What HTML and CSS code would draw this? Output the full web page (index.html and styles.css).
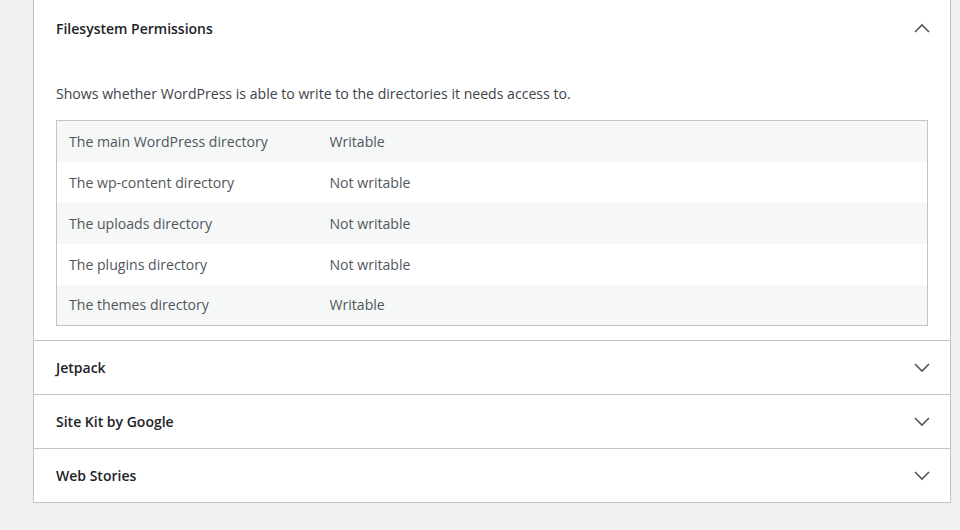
FILE: index.html
```html
<!DOCTYPE html>
<html>
<head>
<meta charset="utf-8">
<link rel="stylesheet" href="styles.css">
</head>
<body>
<div class="wrap">
  <div class="accordion">
    <section class="panel open">
      <div class="panel-head first">
        <span class="title">Filesystem Permissions</span>
        <svg class="chev" width="16" height="10" viewBox="0 0 16 10"><path d="M1 9 L8 2 L15 9" fill="none" stroke="#50575e" stroke-width="1.6"/></svg>
      </div>
      <div class="panel-body">
        <p class="desc">Shows whether WordPress is able to write to the directories it needs access to.</p>
        <table class="info">
          <tr><td class="k">The main WordPress directory</td><td>Writable</td></tr>
          <tr><td class="k">The wp-content directory</td><td>Not writable</td></tr>
          <tr><td class="k">The uploads directory</td><td>Not writable</td></tr>
          <tr><td class="k">The plugins directory</td><td>Not writable</td></tr>
          <tr><td class="k">The themes directory</td><td>Writable</td></tr>
        </table>
      </div>
    </section>
    <section class="panel">
      <div class="panel-head">
        <span class="title">Jetpack</span>
        <svg class="chev" width="16" height="10" viewBox="0 0 16 10"><path d="M1 1 L8 8 L15 1" fill="none" stroke="#50575e" stroke-width="1.6"/></svg>
      </div>
    </section>
    <section class="panel">
      <div class="panel-head">
        <span class="title">Site Kit by Google</span>
        <svg class="chev" width="16" height="10" viewBox="0 0 16 10"><path d="M1 1 L8 8 L15 1" fill="none" stroke="#50575e" stroke-width="1.6"/></svg>
      </div>
    </section>
    <section class="panel">
      <div class="panel-head">
        <span class="title">Web Stories</span>
        <svg class="chev" width="16" height="10" viewBox="0 0 16 10"><path d="M1 1 L8 8 L15 1" fill="none" stroke="#50575e" stroke-width="1.6"/></svg>
      </div>
    </section>
  </div>
</div>
</body>
</html>
```
FILE: styles.css
```css
html, body {
  margin: 0;
  padding: 0;
  background: #f0f0f1;
  font-family: "Open Sans", "Noto Sans", sans-serif;
  color: #2c3338;
}
.wrap {
  padding: 0 9px 0 33px;
}
.accordion {
  background: #fff;
  border: 1px solid #c3c4c7;
  border-top: none;
  width: 916px;
}
.panel + .panel {
  border-top: 1px solid #c3c4c7;
}
.panel-head {
  height: 53px;
  display: flex;
  align-items: center;
  justify-content: space-between;
  padding: 0 20px 0 22px;
}
.panel-head.first {
  height: 56px;
}
.title {
  font-size: 14px;
  font-weight: 600;
  color: #1d2327;
}
.chev {
  display: block;
}
.panel-body {
  padding: 0 22px 14px 22px;
}
.desc {
  margin: 0;
  padding: 27px 0 15px;
  font-size: 14.1px;
  line-height: 22px;
  color: #3c434a;
}
.info {
  width: 100%;
  border-collapse: collapse;
  border: 1px solid #c3c4c7;
  font-size: 14.1px;
  color: #50575e;
}
.info tr:nth-child(odd) {
  background: #f6f7f7;
}
.info td {
  height: 41px;
  padding: 0 12px;
  box-sizing: border-box;
}
.info td.k {
  width: 261px;
}
```
